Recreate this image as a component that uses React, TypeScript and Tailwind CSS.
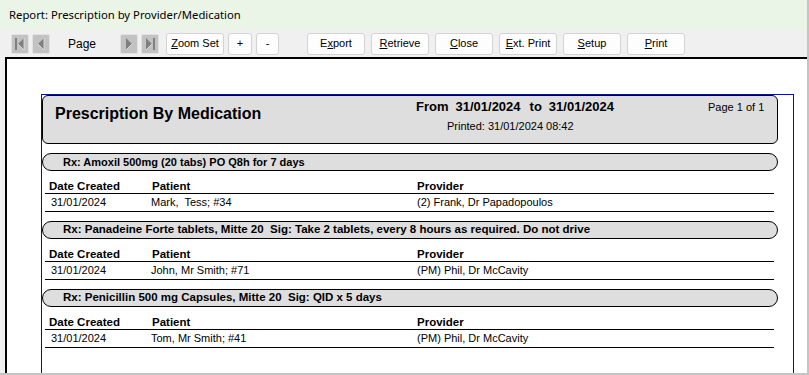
const font = { fontFamily: '"Liberation Sans", Arial, sans-serif' };

function NavIcon({ dir, end }: { dir: "left" | "right"; end?: boolean }) {
  // small embossed VCR style nav glyph
  const left = dir === "left";
  return (
    <div className="w-[18px] h-[20px] rounded-[2px] border border-[#e2e2e2] bg-[#c2c2c2] flex items-center justify-center">
      <svg width="14" height="16" viewBox="0 0 14 16">
        {left ? (
          <>
            {end && <rect x="2" y="2" width="2" height="12" fill="#808080" />}
            <polygon points={end ? "11,2 5,8 11,14" : "10,2 4,8 10,14"} fill="#808080" />
            <polyline points={end ? "5,8 11,14 11,2" : "4,8 10,14 10,2"} fill="none" stroke="#e6e6e6" strokeWidth="0.8" />
          </>
        ) : (
          <>
            <polygon points={end ? "3,2 9,8 3,14" : "4,2 10,8 4,14"} fill="#808080" />
            <polyline points={end ? "3,14 9,8" : "4,14 10,8"} fill="none" stroke="#e6e6e6" strokeWidth="0.8" />
            {end && <rect x="10" y="2" width="2" height="12" fill="#808080" />}
          </>
        )}
      </svg>
    </div>
  );
}

function Btn({ children, w }: { children: React.ReactNode; w: string }) {
  return (
    <button
      className={`${w} h-[22px] shrink-0 rounded-[3px] border border-[#d3d3d3] bg-[#fdfdfd] text-[11px] text-black flex items-center justify-center`}
      style={font}
    >
      {children}
    </button>
  );
}

const sections = [
  {
    rx: "Rx: Amoxil 500mg (20 tabs) PO Q8h for 7 days",
    size: "text-[11px]",
    date: "31/01/2024",
    patient: "Mark,  Tess; #34",
    provider: "(2) Frank, Dr Papadopoulos",
  },
  {
    rx: "Rx: Panadeine Forte tablets, Mitte 20  Sig: Take 2 tablets, every 8 hours as required. Do not drive",
    size: "text-[11.5px]",
    date: "31/01/2024",
    patient: "John, Mr Smith; #71",
    provider: "(PM) Phil, Dr McCavity",
  },
  {
    rx: "Rx: Penicillin 500 mg Capsules, Mitte 20  Sig: QID x 5 days",
    size: "text-[11.5px]",
    date: "31/01/2024",
    patient: "Tom, Mr Smith; #41",
    provider: "(PM) Phil, Dr McCavity",
  },
];

function Section({ s }: { s: (typeof sections)[number] }) {
  return (
    <div className="flex flex-col">
      <div className={`mt-[9px] w-[736px] h-[18px] rounded-[9px] border border-black bg-[#dedede] flex items-center pl-[20px] ${s.size} font-bold whitespace-pre`}>
        {s.rx}
      </div>
      <div className="ml-[3px] w-[729px] h-[23px] border-b border-black flex items-end text-[11.5px] font-bold leading-[13px]">
        <div className="w-[107px] pl-[4px]">Date Created</div>
        <div className="w-[265px]">Patient</div>
        <div>Provider</div>
      </div>
      <div className="ml-[3px] w-[729px] h-[18px] border-b border-black flex items-center text-[11px] leading-[13px] whitespace-pre">
        <div className="w-[106px] pl-[6px]">{s.date}</div>
        <div className="w-[266px]">{s.patient}</div>
        <div>{s.provider}</div>
      </div>
    </div>
  );
}

export default function App() {
  return (
    <div className="w-[809px] h-[375px] bg-[#f0f0f0] border-r-2 border-b-2 border-[#c4c4c4] flex flex-col overflow-hidden text-black">
      {/* Title bar */}
      <div
        className="h-[30px] shrink-0 bg-[#eaf5e8] pl-[9px] flex items-center text-[11.3px]"
        style={{ fontFamily: '"Noto Sans", "Liberation Sans", sans-serif' }}
      >
        Report: Prescription by Provider/Medication
      </div>

      {/* Toolbar */}
      <div className="h-[27px] shrink-0 pl-[11px] flex items-center" style={font}>
        <NavIcon dir="left" end />
        <div className="ml-[3px]">
          <NavIcon dir="left" />
        </div>
        <span className="ml-[18px] w-[29px] text-[12px]">Page</span>
        <div className="ml-[23px]">
          <NavIcon dir="right" />
        </div>
        <div className="ml-[3px]">
          <NavIcon dir="right" end />
        </div>
        <div className="ml-[7px] flex items-center gap-[4px]">
          <Btn w="w-[58px]">
            <span><u>Z</u>oom Set</span>
          </Btn>
          <Btn w="w-[24px]">+</Btn>
          <Btn w="w-[23px]">-</Btn>
        </div>
        <div className="ml-[28px] flex items-center gap-[6px]">
          <Btn w="w-[58px]">
            <span>E<u>x</u>port</span>
          </Btn>
          <Btn w="w-[58px]">
            <span><u>R</u>etrieve</span>
          </Btn>
          <Btn w="w-[58px]">
            <span><u>C</u>lose</span>
          </Btn>
          <Btn w="w-[58px]">
            <span><u>E</u>xt. Print</span>
          </Btn>
          <Btn w="w-[58px]">
            <span><u>S</u>etup</span>
          </Btn>
          <Btn w="w-[58px]">
            <span><u>P</u>rint</span>
          </Btn>
        </div>
      </div>

      {/* Preview area */}
      <div className="flex-1 ml-[5px] border-t-2 border-l-2 border-black bg-white pl-[34px] pt-[35px] flex overflow-hidden" style={font}>
        <div className="w-[753px] border-l border-t border-r border-[#0000ff] flex flex-col">
          {/* Report header */}
          <div className="w-[736px] h-[49px] shrink-0 rounded-[6px] border border-black bg-[#dedede] flex items-start">
            <div className="w-[373px] pl-[12px] pt-[8px] text-[16px] font-bold leading-[19px]">
              Prescription By Medication
            </div>
            <div className="w-[292px] pt-[3px] flex flex-col">
              <div className="flex items-center text-[13px] font-bold leading-[15px]">
                <span>From</span>
                <span className="ml-[7px]">31/01/2024</span>
                <span className="ml-[9px]">to</span>
                <span className="ml-[7px]">31/01/2024</span>
              </div>
              <div className="mt-[6px] ml-[31px] text-[11px] leading-[13px]">Printed: 31/01/2024 08:42</div>
            </div>
            <div className="pt-[5px] text-[11px] leading-[13px]">Page 1 of 1</div>
          </div>

          {sections.map((s, i) => (
            <Section key={i} s={s} />
          ))}
        </div>
      </div>
    </div>
  );
}
